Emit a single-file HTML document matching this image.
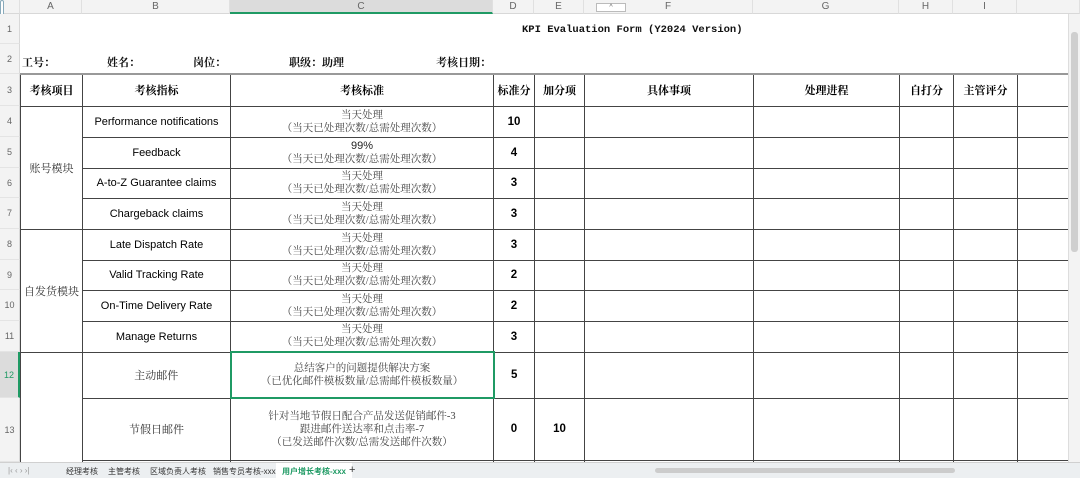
<!DOCTYPE html>
<html><head><meta charset="utf-8"><style>
*{margin:0;padding:0;box-sizing:border-box}
body{width:1080px;height:478px;overflow:hidden;background:#fff;position:relative;font-family:"Liberation Sans","Noto Sans CJK SC",sans-serif;}
.colh{position:absolute;top:0;height:14px;background:#f3f3f3;border-bottom:1px solid #d8d8d8;font-size:10px;color:#666;text-align:center;line-height:14px;border-right:1px solid #e0e0e0}
.rowh{position:absolute;left:0;width:20px;background:#f3f3f3;border-right:1px solid #d8d8d8;font-size:9px;color:#666;text-align:center;border-bottom:1px solid #e4e4e4}
.t{position:absolute;font-family:"Liberation Serif","Noto Serif CJK SC",serif;font-weight:bold;font-size:11px;color:#111}
table{position:absolute;left:20px;top:73px;border-collapse:collapse;table-layout:fixed}
td{border:1px solid #444;text-align:center;vertical-align:middle;font-size:11px;padding:0;overflow:hidden}
.h td{font-family:"Liberation Serif","Noto Serif CJK SC",serif;font-weight:bold;border-top:2px solid #999}
.s{font-family:"Liberation Serif","Noto Serif CJK SC",serif;color:#444;font-size:10.5px;line-height:13px}
.n{font-weight:bold;font-size:11.5px}
.cn{font-family:"Liberation Serif","Noto Serif CJK SC",serif;color:#333}
.tabs{position:absolute;left:0;top:462px;width:1080px;height:16px;background:#eceff1;border-top:1px solid #d0d0d0;font-size:8px;color:#333}
.tabs span{position:absolute;top:3px}
</style></head><body>
<div class="colh" style="left:0;width:20px"></div>
<div class="colh" style="left:20px;width:62px">A</div>
<div class="colh" style="left:82px;width:148px">B</div>
<div class="colh" style="left:230px;width:263px;background:#dcdcdc;border-bottom:2px solid #1f9a64">C</div>
<div class="colh" style="left:493px;width:41px">D</div>
<div class="colh" style="left:534px;width:50px">E</div>
<div class="colh" style="left:584px;width:169px">F</div>
<div class="colh" style="left:753px;width:146px">G</div>
<div class="colh" style="left:899px;width:54px">H</div>
<div class="colh" style="left:953px;width:64px">I</div>
<div class="colh" style="left:1017px;width:63px"></div>
<div style="position:absolute;left:596px;top:3px;width:30px;height:9px;border:1px solid #bbb;background:#fff;font-size:7px;text-align:center;line-height:8px;color:#666">^</div>
<div style="position:absolute;left:0;top:0;width:4px;height:22px;border:1px solid #8ab;border-radius:3px;background:#fff"></div>

<div class="rowh" style="top:14px;height:30px;line-height:30px">1</div>
<div class="rowh" style="top:44px;height:30px;line-height:30px">2</div>
<div class="rowh" style="top:74px;height:32px;line-height:32px">3</div>
<div class="rowh" style="top:106px;height:31px;line-height:31px">4</div>
<div class="rowh" style="top:137px;height:31px;line-height:31px">5</div>
<div class="rowh" style="top:168px;height:30px;line-height:30px">6</div>
<div class="rowh" style="top:198px;height:31px;line-height:31px">7</div>
<div class="rowh" style="top:229px;height:31px;line-height:31px">8</div>
<div class="rowh" style="top:260px;height:30px;line-height:30px">9</div>
<div class="rowh" style="top:290px;height:31px;line-height:31px">10</div>
<div class="rowh" style="top:321px;height:31px;line-height:31px">11</div>
<div class="rowh" style="top:352px;height:46px;line-height:46px;background:#dcdcdc;color:#1f9a64;border-right:2px solid #1f9a64">12</div>
<div class="rowh" style="top:398px;height:64px;line-height:64px">13</div>

<div class="t" style="left:522px;top:24px;font-family:'Liberation Mono','Noto Serif CJK SC',monospace;font-size:10.5px">KPI Evaluation Form (Y2024 Version)</div>
<div class="t" style="left:22px;top:54px">工号：</div>
<div class="t" style="left:107px;top:54px">姓名：</div>
<div class="t" style="left:193px;top:54px">岗位：</div>
<div class="t" style="left:289px;top:54px">职级：助理</div>
<div class="t" style="left:436px;top:54px">考核日期：</div>

<table>
<colgroup><col style="width:62px"><col style="width:148px"><col style="width:263px"><col style="width:41px"><col style="width:50px"><col style="width:169px"><col style="width:146px"><col style="width:54px"><col style="width:64px"><col style="width:51px"></colgroup>
<tr class="h" style="height:32px"><td>考核项目</td><td>考核指标</td><td>考核标准</td><td>标准分</td><td>加分项</td><td>具体事项</td><td>处理进程</td><td>自打分</td><td>主管评分</td><td></td></tr>
<tr style="height:31px"><td rowspan="4" class="cn">账号模块</td><td>Performance notifications</td><td class="s">当天处理<br>（当天已处理次数/总需处理次数）</td><td class="n">10</td><td></td><td></td><td></td><td></td><td></td><td></td></tr>
<tr style="height:31px"><td>Feedback</td><td class="s"><span style="font-family:'Liberation Sans';color:#222;font-size:11px">99%</span><br>（当天已处理次数/总需处理次数）</td><td class="n">4</td><td></td><td></td><td></td><td></td><td></td><td></td></tr>
<tr style="height:30px"><td>A-to-Z Guarantee claims</td><td class="s">当天处理<br>（当天已处理次数/总需处理次数）</td><td class="n">3</td><td></td><td></td><td></td><td></td><td></td><td></td></tr>
<tr style="height:31px"><td>Chargeback claims</td><td class="s">当天处理<br>（当天已处理次数/总需处理次数）</td><td class="n">3</td><td></td><td></td><td></td><td></td><td></td><td></td></tr>
<tr style="height:31px"><td rowspan="4" class="cn">自发货模块</td><td>Late Dispatch Rate</td><td class="s">当天处理<br>（当天已处理次数/总需处理次数）</td><td class="n">3</td><td></td><td></td><td></td><td></td><td></td><td></td></tr>
<tr style="height:30px"><td>Valid Tracking Rate</td><td class="s">当天处理<br>（当天已处理次数/总需处理次数）</td><td class="n">2</td><td></td><td></td><td></td><td></td><td></td><td></td></tr>
<tr style="height:31px"><td>On-Time Delivery Rate</td><td class="s">当天处理<br>（当天已处理次数/总需处理次数）</td><td class="n">2</td><td></td><td></td><td></td><td></td><td></td><td></td></tr>
<tr style="height:31px"><td>Manage Returns</td><td class="s">当天处理<br>（当天已处理次数/总需处理次数）</td><td class="n">3</td><td></td><td></td><td></td><td></td><td></td><td></td></tr>
<tr style="height:46px"><td rowspan="3"></td><td class="cn">主动邮件</td><td class="s" style="border:2px solid #1f9a64">总结客户的问题提供解决方案<br>（已优化邮件模板数量/总需邮件模板数量）</td><td class="n">5</td><td></td><td></td><td></td><td></td><td></td><td></td></tr>
<tr style="height:62px"><td class="cn">节假日邮件</td><td class="s">针对当地节假日配合产品发送促销邮件-3<br>跟进邮件送达率和点击率-7<br>（已发送邮件次数/总需发送邮件次数）</td><td class="n">0</td><td class="n">10</td><td></td><td></td><td></td><td></td><td></td></tr>
<tr style="height:10px"><td></td><td></td><td></td><td></td><td></td><td></td><td></td><td></td><td></td></tr>
</table>

<div style="position:absolute;left:1068px;top:14px;width:12px;height:448px;background:#f3f3f3;border-left:1px solid #ddd"></div>
<div style="position:absolute;left:1071px;top:32px;width:7px;height:220px;background:#cfcfcf;border-radius:3px"></div>

<div class="tabs">
<span style="left:8px;color:#999">|‹ ‹ › ›|</span>
<span style="left:66px">经理考核</span>
<span style="left:108px">主管考核</span>
<span style="left:150px">区域负责人考核</span>
<span style="left:213px">销售专员考核-xxx</span>
<span style="left:276px;top:0;height:15px;padding:3px 6px;background:#fff;color:#1f9a64;font-weight:bold">用户增长考核-xxx</span>
<span style="left:349px;font-size:11px;top:1px">+</span>
<div style="position:absolute;left:655px;top:5px;width:300px;height:5px;background:#ccc;border-radius:3px"></div>
</div>
</body></html>
